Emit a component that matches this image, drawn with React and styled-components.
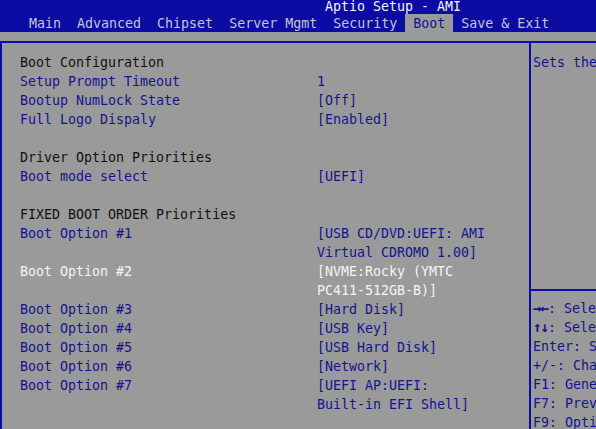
import React from "react";
import styled, { createGlobalStyle } from "styled-components";

const BLUE = "#0c0ca4";
const GRAY = "#9a9a9a";
const INK = "#14148e";

const GlobalStyle = createGlobalStyle`
  html, body {
    margin: 0;
    padding: 0;
    background: ${GRAY};
    overflow: hidden;
  }
  body {
    font-family: "DejaVu Sans Mono", "Liberation Mono", monospace;
    font-size: 13.3px;
  }
`;

const Screen = styled.div`
  width: 596px;
  height: 429px;
  overflow: hidden;
  background: ${GRAY};
  white-space: nowrap;
`;

const TopBar = styled.div`
  background: ${BLUE};
  height: 32px;
`;

const Title = styled.div`
  height: 14px;
  line-height: 14px;
  padding-left: 325px;
  color: #f2f2f2;
`;

const TabRow = styled.div`
  display: flex;
  height: 18px;
  padding-left: 21px;
`;

const Tab = styled.div`
  height: 18px;
  box-sizing: border-box;
  padding: 1px 8px 0;
  line-height: 17px;
  color: ${(p) => (p.$active ? INK : "#c4c4d6")};
  background: ${(p) => (p.$active ? GRAY : "transparent")};
`;

const Panel = styled.div`
  margin-top: 9px;
  display: grid;
  grid-template-columns: 527px 300px;
  border-top: 2px solid ${BLUE};
  border-left: 2px solid ${BLUE};
  height: 400px;
`;

const Settings = styled.div`
  padding: 10px 0 0 18px;
`;

const Row = styled.div`
  display: grid;
  grid-template-columns: 297px auto;
  line-height: 19px;
  min-height: 19px;
  color: ${(p) => p.$color};
`;

const Value = styled.div`
  display: flex;
  flex-direction: column;
`;

const Help = styled.div`
  border-left: 2px solid ${BLUE};
  display: flex;
  flex-direction: column;
`;

const HelpText = styled.div`
  min-height: 246px;
  box-sizing: border-box;
  padding: 10px 0 0 2px;
  line-height: 19px;
  color: ${INK};
`;

const Keys = styled.div`
  border-top: 2px solid ${BLUE};
  padding: 8px 0 0 2px;
  line-height: 19px;
  color: ${INK};
`;

const Glyph = styled.span`
  font-weight: bold;
  font-size: 14.5px;
  letter-spacing: -1.2px;
`;

const tabs = ["Main", "Advanced", "Chipset", "Server Mgmt", "Security", "Boot", "Save & Exit"];

const rows = [
  { label: "Boot Configuration", kind: "head" },
  { label: "Setup Prompt Timeout", value: ["1"] },
  { label: "Bootup NumLock State", value: ["[Off]"] },
  { label: "Full Logo Dispaly", value: ["[Enabled]"] },
  { label: "" },
  { label: "Driver Option Priorities", kind: "head" },
  { label: "Boot mode select", value: ["[UEFI]"] },
  { label: "" },
  { label: "FIXED BOOT ORDER Priorities", kind: "head" },
  { label: "Boot Option #1", value: ["[USB CD/DVD:UEFI: AMI", "Virtual CDROMO 1.00]"] },
  { label: "Boot Option #2", value: ["[NVME:Rocky (YMTC", "PC411-512GB-B)]"], kind: "sel" },
  { label: "Boot Option #3", value: ["[Hard Disk]"] },
  { label: "Boot Option #4", value: ["[USB Key]"] },
  { label: "Boot Option #5", value: ["[USB Hard Disk]"] },
  { label: "Boot Option #6", value: ["[Network]"] },
  { label: "Boot Option #7", value: ["[UEFI AP:UEFI:", "Built-in EFI Shell]"] },
];

const colorFor = (kind) => (kind === "head" ? "#111" : kind === "sel" ? "#f4f4f4" : INK);

const keys = [
  ["→←", ": Select Screen"],
  ["↑↓", ": Select Item"],
  ["", "Enter: Select"],
  ["", "+/-: Change Opt."],
  ["", "F1: General Help"],
  ["", "F7: Previous Values"],
  ["", "F9: Optimized Defaults"],
];

export default function App() {
  return (
    <Screen>
      <GlobalStyle />
      <TopBar>
        <Title>Aptio Setup - AMI</Title>
        <TabRow>
          {tabs.map((t) => (
            <Tab key={t} $active={t === "Boot"}>
              {t}
            </Tab>
          ))}
        </TabRow>
      </TopBar>
      <Panel>
        <Settings>
          {rows.map((r, i) => (
            <Row key={i} $color={colorFor(r.kind)}>
              <div>{r.label}</div>
              {r.value && (
                <Value>
                  {r.value.map((v) => (
                    <span key={v}>{v}</span>
                  ))}
                </Value>
              )}
            </Row>
          ))}
        </Settings>
        <Help>
          <HelpText>Sets the system boot order</HelpText>
          <Keys>
            {keys.map(([g, t]) => (
              <div key={t}>
                {g && <Glyph>{g}</Glyph>}
                {t}
              </div>
            ))}
          </Keys>
        </Help>
      </Panel>
    </Screen>
  );
}
